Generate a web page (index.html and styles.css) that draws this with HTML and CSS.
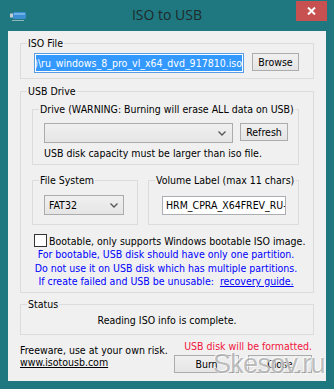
FILE: index.html
```html
<!DOCTYPE html>
<html lang="en">
<head>
  <meta charset="UTF-8">
  <title>ISO to USB</title>
  <link rel="stylesheet" href="styles.css">
</head>
<body>
  <div class="window">
    <div class="titlebar">
      <svg class="app-icon" width="17" height="10" viewBox="0 0 17 10">
        <rect x="0" y="1.5" width="4" height="4" fill="#c3ccd2"/>
        <rect x="3" y="0" width="13" height="7" rx="1.5" fill="#3b8ed0"/>
        <rect x="4" y="1" width="11" height="2" fill="#6fb3e6"/>
        <rect x="2" y="8" width="12" height="1" fill="#8fb6bb"/>
      </svg>
      <div class="title">ISO to USB</div>
      <div class="close-btn">
        <svg width="9" height="8" viewBox="0 0 9 8">
          <path d="M1 0.5 L8 7.5 M8 0.5 L1 7.5" stroke="#fff" stroke-width="2"/>
        </svg>
      </div>
    </div>

    <div class="client">
      <div class="group">
        <div class="group-title">ISO File</div>
        <div class="group-body iso-body">
          <div class="textbox focused">
            <div class="selection"><span>D:\Distrib\Windows 8 Pro VL (x64) (Russian)n))\ru_windows_8_pro_vl_x64_dvd_917810.iso</span></div>
          </div>
          <button type="button" class="btn browse">Browse</button>
        </div>
      </div>

      <div class="group usb">
        <div class="group-title">USB Drive</div>
        <div class="group-body usb-body">
          <div class="group drive">
            <div class="group-title">Drive (WARNING: Burning will erase ALL data on USB)</div>
            <div class="group-body drive-body">
              <div class="row">
                <div class="combo drive-combo">
                  <span></span>
                  <svg width="8" height="5" viewBox="0 0 8 5"><polyline points="0.5,0.5 4,4 7.5,0.5" fill="none" stroke="#555" stroke-width="1.3"/></svg>
                </div>
                <button type="button" class="btn refresh">Refresh</button>
              </div>
              <div class="note">USB disk capacity must be larger than iso file.</div>
            </div>
          </div>

          <div class="options">
            <div class="group fs">
              <div class="group-title">File System</div>
              <div class="group-body fs-body">
                <div class="combo fs-combo">
                  <span>FAT32</span>
                  <svg width="8" height="5" viewBox="0 0 8 5"><polyline points="0.5,0.5 4,4 7.5,0.5" fill="none" stroke="#555" stroke-width="1.3"/></svg>
                </div>
              </div>
            </div>
            <div class="group vol">
              <div class="group-title">Volume Label (max 11 chars)</div>
              <div class="group-body vol-body">
                <div class="textbox vol-input">HRM_CPRA_X64FREV_RU-RU_DV5</div>
              </div>
            </div>
          </div>

          <label class="check">
            <span class="box"></span>
            <span>Bootable, only supports Windows bootable ISO image.</span>
          </label>

          <div class="hints">
            <div>For bootable, USB disk should have only one partition.</div>
            <div>Do not use it on USB disk which has multiple partitions.</div>
            <div>If create failed and USB be unusable:&nbsp; <a href="#">recovery guide.</a></div>
          </div>
        </div>
      </div>

      <div class="group status">
        <div class="group-title">Status</div>
        <div class="group-body status-body">Reading ISO info is complete.</div>
      </div>

      <div class="footer">
        <div class="about">
          <div>Freeware, use at your own risk.</div>
          <a href="#">www.isotousb.com</a>
        </div>
        <div class="actions">
          <div class="warn">USB disk will be formatted.</div>
          <div class="buttons">
            <button type="button" class="btn burn">Burn</button>
            <button type="button" class="btn close">Close</button>
          </div>
        </div>
      </div>
    </div>

    <div class="watermark">Skesov.ru</div>
  </div>
</body>
</html>
```

FILE: styles.css
```css
body {
  margin: 0;
  font-family: "DejaVu Sans Condensed", "Liberation Sans", sans-serif;
  font-size: 10.5px;
  color: #000;
}
.window {
  position: relative;
  width: 334px;
  height: 389px;
  box-sizing: border-box;
  padding: 0 8px 8px;
  background-color: #1f7880;
  display: flex;
  flex-direction: column;
}
.titlebar {
  height: 31px;
  display: grid;
  grid-template-columns: 1fr auto 1fr;
  align-items: start;
}
.app-icon {
  margin: 12px 0 0 2px;
}
.title {
  font-family: "Open Sans", sans-serif;
  font-size: 14px;
  line-height: 20px;
  margin-top: 5px;
  color: #1e2a2c;
}
.close-btn {
  justify-self: end;
  width: 31px;
  height: 20px;
  margin: 1px -1px 0 0;
  background-color: #c75050;
  display: flex;
  align-items: center;
  justify-content: center;
}
.client {
  flex: 1;
  background-color: #f0f0f0;
  padding: 12px 12px 0;
}

/* group boxes */
.group {
  border: 1px solid #dcdcdc;
}
.group-title {
  width: fit-content;
  margin: -7px 0 0 6px;
  padding: 0 1px;
  line-height: 13px;
  background-color: #f0f0f0;
  white-space: nowrap;
}
.iso-body {
  display: flex;
  align-items: flex-start;
  gap: 8px;
  padding: 3px 0 5px 13px;
}
.usb {
  margin-top: 12px;
}
.usb-body {
  padding: 0 14px 3px 11px;
}
.drive {
  margin-top: 11px;
}
.drive-body {
  padding: 7px 0 4px 11px;
}
.row {
  display: flex;
  align-items: flex-start;
  gap: 7px;
}
.note {
  margin-top: 4px;
  line-height: 13px;
}
.options {
  display: flex;
  gap: 10px;
  margin-top: 15px;
}
.fs {
  width: 106px;
  box-sizing: border-box;
}
.vol {
  width: 151px;
  box-sizing: border-box;
}
.fs-body {
  padding: 8px 0 9px 11px;
}
.vol-body {
  padding: 9px 0 9px 13px;
}
.status {
  margin-top: 11px;
}
.status-body {
  padding: 3px 0 7px;
  line-height: 13px;
  text-align: center;
}

/* controls */
.btn {
  box-sizing: border-box;
  height: 18px;
  padding: 0;
  border: 1px solid #acacac;
  border-radius: 0;
  background: linear-gradient(#f0f0f0, #e5e5e5);
  font-family: inherit;
  font-size: 10.5px;
  color: #000;
}
.browse {
  width: 47px;
}
.refresh {
  width: 48px;
}
.burn {
  width: 65px;
}
.close {
  width: 64px;
}
.textbox {
  box-sizing: border-box;
  height: 20px;
  border: 1px solid #abadb3;
  background-color: #fff;
  overflow: hidden;
  white-space: nowrap;
}
.focused {
  flex-shrink: 0;
  width: 210px;
  padding: 1px;
  border-color: #569de5;
}
.selection {
  height: 16px;
  display: flex;
  justify-content: flex-end;
  align-items: center;
  overflow: hidden;
  background-color: #3399ff;
  color: #fff;
}
.selection span {
  flex-shrink: 0;
}
.vol-input {
  width: 124px;
  height: 19px;
  padding-left: 3px;
  line-height: 17px;
}
.combo {
  box-sizing: border-box;
  height: 20px;
  display: flex;
  align-items: center;
  justify-content: space-between;
  padding: 0 6px 0 4px;
  border: 1px solid #acacac;
  background: linear-gradient(#f0f0f0, #e5e5e5);
}
.drive-combo {
  flex-shrink: 0;
  width: 189px;
}
.fs-combo {
  width: 80px;
  padding-right: 5px;
}
.check {
  display: flex;
  align-items: center;
  gap: 2px;
  margin: 9px 0 0 2px;
  height: 13px;
  white-space: nowrap;
}
.box {
  flex-shrink: 0;
  box-sizing: border-box;
  width: 13px;
  height: 13px;
  border: 1px solid #333;
  background-color: #fff;
}
.hints {
  margin-top: 1px;
  padding-left: 1px;
  line-height: 13.5px;
  text-align: center;
  white-space: nowrap;
  color: #0000ff;
}
.hints a {
  color: #0000ff;
}

/* footer */
.footer {
  display: flex;
  justify-content: space-between;
  padding-right: 2px;
}
.about {
  margin-top: 9px;
  line-height: 12px;
  white-space: nowrap;
}
.about a {
  color: #000;
}
.actions {
  margin-top: 5px;
  display: flex;
  flex-direction: column;
  align-items: flex-end;
}
.warn {
  line-height: 13px;
  white-space: nowrap;
  color: #f0143c;
}
.buttons {
  display: flex;
  gap: 9px;
  margin-top: 2px;
}
.watermark {
  position: absolute;
  left: 213px;
  top: 349px;
  font-family: "Liberation Sans", sans-serif;
  font-size: 27px;
  letter-spacing: -0.7px;
  color: rgba(110, 110, 110, 0.45);
  text-shadow: 1px 1px 0 rgba(255, 255, 255, 0.7), -1px -1px 0 rgba(255, 255, 255, 0.7);
}
```
